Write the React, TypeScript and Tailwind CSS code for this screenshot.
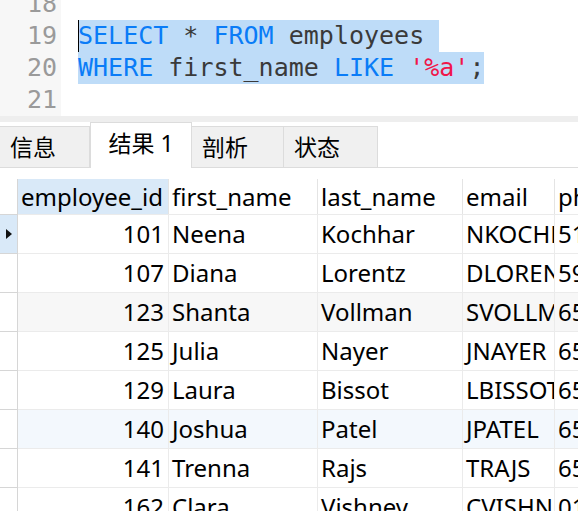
import React from 'react';

const codeLines = [
  { n: 18, parts: [] as { t: string; c: string }[], sel: false },
  {
    n: 19,
    sel: true,
    parts: [
      { t: 'SELECT', c: 'text-[#0a7cf7]' },
      { t: ' * ', c: 'text-[#3a3a3a]' },
      { t: 'FROM', c: 'text-[#0a7cf7]' },
      { t: ' employees ', c: 'text-[#3a3a3a]' },
    ],
  },
  {
    n: 20,
    sel: true,
    parts: [
      { t: 'WHERE', c: 'text-[#0a7cf7]' },
      { t: ' first_name ', c: 'text-[#3a3a3a]' },
      { t: 'LIKE', c: 'text-[#0a7cf7]' },
      { t: ' ', c: 'text-[#3a3a3a]' },
      { t: "'%a'", c: 'text-[#f0164a]' },
      { t: ';', c: 'text-[#3a3a3a]' },
    ],
  },
  { n: 21, parts: [], sel: false },
];

const rows = [
  { id: 101, first: 'Neena', last: 'Kochhar', email: 'NKOCHHAR', phone: '515.123.4568', bg: 'bg-white' },
  { id: 107, first: 'Diana', last: 'Lorentz', email: 'DLORENTZ', phone: '590.423.5567', bg: 'bg-white' },
  { id: 123, first: 'Shanta', last: 'Vollman', email: 'SVOLLMAN', phone: '650.123.4234', bg: 'bg-[#f7f7f7]' },
  { id: 125, first: 'Julia', last: 'Nayer', email: 'JNAYER', phone: '650.124.1214', bg: 'bg-white' },
  { id: 129, first: 'Laura', last: 'Bissot', email: 'LBISSOT', phone: '650.124.5234', bg: 'bg-white' },
  { id: 140, first: 'Joshua', last: 'Patel', email: 'JPATEL', phone: '650.121.1834', bg: 'bg-[#f3f8fd]' },
  { id: 141, first: 'Trenna', last: 'Rajs', email: 'TRAJS', phone: '650.121.8009', bg: 'bg-white' },
  { id: 162, first: 'Clara', last: 'Vishney', email: 'CVISHNEY', phone: '011.44.1346.129268', bg: 'bg-white' },
];

const tabs = ['信息', '结果 1', '剖析', '状态'];

export default function App() {
  return (
    <div className="w-[578px] h-[511px] overflow-hidden bg-white font-['Noto_Sans','Noto_Sans_CJK_SC',sans-serif] text-black">
      {/* SQL editor */}
      <div className="h-[116px] overflow-hidden flex">
        <div className="w-[61px] bg-[#f7f7f7] shrink-0">
          <div className="-mt-[12px]">
            {codeLines.map((l) => (
              <div
                key={l.n}
                className="h-[32px] leading-[32px] text-right pr-[4px] font-['DejaVu_Sans_Mono',monospace] text-[25px] text-[#9a9a9a]"
              >
                {l.n}
              </div>
            ))}
          </div>
        </div>
        <div className="flex-1 pl-[17px]">
          <div className="-mt-[12px]">
            {codeLines.map((l) => (
              <div key={l.n} className="h-[32px] leading-[32px] flex font-['DejaVu_Sans_Mono',monospace] text-[25px] whitespace-pre">
                <span className={`relative ${l.sel ? 'bg-[#bedcf8]' : ''}`}>
                  {l.n === 19 && <span className="absolute left-0 top-0 w-px h-[32px] bg-black" />}
                  {l.parts.map((p, i) => (
                    <span key={i} className={p.c}>
                      {p.t}
                    </span>
                  ))}
                </span>
              </div>
            ))}
          </div>
        </div>
      </div>
      <div className="h-[6px] bg-[#eeeeee]" />

      {/* Tabs */}
      <div className="h-[46px] flex items-end border-b border-[#dcdcdc]">
        {tabs.map((t, i) =>
          i === 1 ? (
            <div
              key={t}
              className="w-[102px] h-[46px] -mb-px bg-white border border-b-0 border-[#dcdcdc] flex items-center justify-center text-[23px] pb-[4px]"
            >
              {t}
            </div>
          ) : (
            <div
              key={t}
              className={`h-[41px] ${i === 0 ? 'w-[90px]' : i === 2 ? 'w-[92px]' : 'w-[94px]'} border-l-0 bg-[#f0f0f0] border border-b-0 border-[#dcdcdc] flex items-center pl-[10px] text-[23px]`}
            >
              {t}
            </div>
          )
        )}
      </div>

      {/* Grid */}
      <div className="mt-[11px] text-[24px] leading-none">
        <div className="flex h-[35px]">
          <div className="w-[18px] shrink-0 border-r border-[#d6d6d6]" />
          <div className="w-[151px] shrink-0 bg-[#d9e9f8] border-r border-[#e4e4e4] flex items-center pl-[3px] overflow-hidden whitespace-nowrap">employee_id</div>
          <div className="w-[149px] shrink-0 border-r border-[#e4e4e4] flex items-center pl-[3px]">first_name</div>
          <div className="w-[145px] shrink-0 border-r border-[#e4e4e4] flex items-center pl-[3px]">last_name</div>
          <div className="w-[92px] shrink-0 border-r border-[#e4e4e4] flex items-center pl-[3px]">email</div>
          <div className="flex-1 flex items-center pl-[3px] overflow-hidden whitespace-nowrap">phone_number</div>
        </div>
        {rows.map((r, idx) => (
          <div key={r.id} className="flex h-[39px] border-t border-[#ebebeb]">
            <div
              className={`w-[18px] shrink-0 border-r border-[#d6d6d6] -mt-px border-t border-t-[#d6d6d6] ${idx === 0 ? 'bg-[#d9e9f8]' : ''} flex items-center justify-center`}
            >
              {idx === 0 && (
                <svg width="6" height="10" viewBox="0 0 6 10">
                  <path d="M0 0 L6 5 L0 10 Z" fill="#111" />
                </svg>
              )}
            </div>
            <div className={`flex flex-1 ${r.bg}`}>
              <div className="w-[151px] shrink-0 border-r border-[#ebebeb] flex items-center justify-end pr-[4px] pb-px">{r.id}</div>
              <div className="w-[149px] shrink-0 border-r border-[#ebebeb] flex items-center pl-[3px] pb-px">{r.first}</div>
              <div className="w-[145px] shrink-0 border-r border-[#ebebeb] flex items-center pl-[3px] pb-px">{r.last}</div>
              <div className="w-[92px] shrink-0 border-r border-[#ebebeb] flex items-center pl-[3px] pb-px overflow-hidden whitespace-nowrap">{r.email}</div>
              <div className="flex-1 flex items-center pl-[3px] pb-px overflow-hidden whitespace-nowrap">{r.phone}</div>
            </div>
          </div>
        ))}
      </div>
    </div>
  );
}
